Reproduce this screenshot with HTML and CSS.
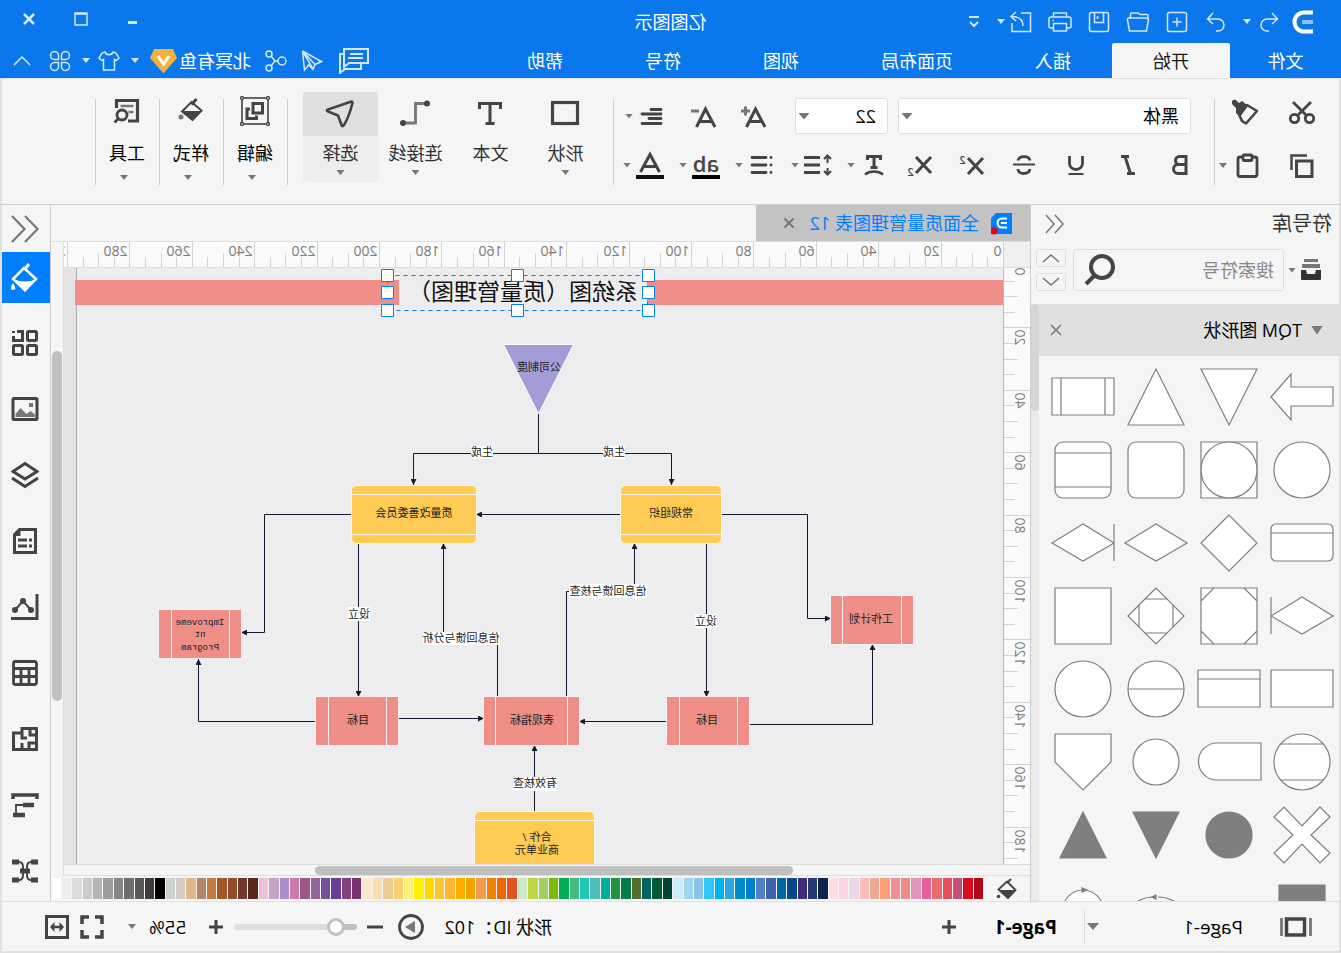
FILE: index.html
```html
<!DOCTYPE html>
<html lang="zh-CN">
<head>
<meta charset="utf-8">
<title>亿图图示</title>
<link rel="stylesheet" href="styles.css">
</head>
<body>
<div class="app">
  <header class="top">
    <div class="titlebar">
      <div class="quick">
        <svg class="brand" width="24" height="24" viewBox="0 0 24 24" fill="none" stroke="#fff"><path d="M2 2.500h9a9.500 9.500 0 0 1 0 19H2" stroke-width="4"/><path d="M2 12h11" stroke="#8fc1fb" stroke-width="4"/></svg>
        <div class="quick-list">
          <span class="pair"><button class="ib" aria-label="撤销"><svg width="24" height="24" viewBox="0 0 24 24"><path d="M9 3L3.500 9l5.500 5M3.500 9h10.500a6 6 0 0 1 0 12h-2"/></svg></button><i class="caret light"></i></span>
          <button class="ib" aria-label="重做"><svg width="24" height="24" viewBox="0 0 24 24"><path d="M15 3l5.500 6-5.500 5M20.500 9H10a6 6 0 0 0 0 12h2"/></svg></button>
          <button class="ib" aria-label="新建"><svg width="24" height="24" viewBox="0 0 24 24"><rect x="2.500" y="2.500" width="19" height="19" rx="2"/><path d="M12 7.500v9M7.500 12h9"/></svg></button>
          <button class="ib" aria-label="打开"><svg width="24" height="24" viewBox="0 0 24 24"><path d="M2 10V5.500q0-1 1-1h7l2-1.500h6.500q1 0 1 1.500V8M3.500 21L1.500 10q0-2 2-2h17q2.500 0 2 2l-2 11z"/></svg></button>
          <button class="ib" aria-label="保存"><svg width="24" height="24" viewBox="0 0 24 24"><rect x="2.500" y="2.500" width="19" height="19" rx="2"/><path d="M7.500 3v9.500h9V3M13.500 6v3"/></svg></button>
          <button class="ib" aria-label="打印"><svg width="24" height="24" viewBox="0 0 24 24"><path d="M5.500 7V3h13v4M5.500 18H3q-2 0-2-2V9q0-2 2-2h18q2 0 2 2v7q0 2-2 2h-2.500M5.500 13.500h13V21h-13zM18 10.500h1.500"/></svg></button>
          <span class="pair narrow"><button class="ib" aria-label="导出"><svg width="24" height="24" viewBox="0 0 24 24"><path d="M12 3H2.500v18.500H21V13M10 16c0-6 4-9.500 11.500-9.500M17 2l5 4.500-5 4.500"/></svg></button><i class="caret light"></i></span>
          <button class="ib" aria-label="自定义"><svg width="16" height="16" viewBox="0 0 16 16"><path d="M3 3h10M4 8l4 4 4-4" stroke-width="2"/></svg></button>
        </div>
      </div>
      <h1>亿图图示</h1>
      <div class="window">
        <button aria-label="最小化"><svg width="16" height="16" viewBox="0 0 16 16"><path d="M4 11.500h9" stroke-width="3"/></svg></button>
        <button aria-label="最大化"><svg width="16" height="16" viewBox="0 0 16 16"><path d="M2 2h12v12H2zM2 3h12" stroke-width="1.500"/></svg></button>
        <button aria-label="关闭"><svg width="16" height="16" viewBox="0 0 16 16"><path d="M3 3l10 10M13 3L3 13" stroke-width="2.500"/></svg></button>
      </div>
    </div>
    <div class="tabbar">
      <nav class="tabs">
        <button class="file">文件</button><button class="on">开始</button><button>插入</button><button>页面布局</button><button>视图</button><button>符号</button><button>帮助</button>
      </nav>
      <div class="account">
        <div class="social">
          <button class="ib chat" aria-label="评论"><svg width="30" height="26" viewBox="0 0 30 26"><path stroke-width="2" d="M1 1h24v18l-5-4H1zM6 6h13M6 10h15M25 6h4v19l-5-4H8v-5"/></svg></button>
          <button class="ib" aria-label="发送"><svg width="22" height="22" viewBox="0 0 22 22"><path d="M20.500 1L1.500 11.500l6.500 3zM8 14.500l2 5 4.500-4.500 4 5 2-19L10 19"/></svg></button>
          <button class="ib" aria-label="分享"><svg width="22" height="22" viewBox="0 0 22 22"><circle cx="5" cy="11" r="4"/><circle cx="18" cy="4" r="3"/><circle cx="18" cy="18" r="3"/><path d="M9 11h3l4-5M12 11l4 5"/></svg></button>
          <span class="user">北冥有鱼<svg width="27" height="26" viewBox="0 0 27 26"><path d="M4 1h19l4 9-13.500 15.500L0 10z" fill="#f5b13d" stroke="none"/><path d="M8 8l5.500 8L19 8" stroke="#fff" stroke-width="3"/></svg></span>
        </div>
        <i class="caret light"></i>
        <span class="pair skin"><button class="ib" aria-label="皮肤"><svg width="22" height="20" viewBox="0 0 22 20"><path d="M7 1c1 3.500 7 3.500 8 0l3 1 3 5-3 2.500-1.500-1V19h-11V8.500L4 9.500 1 7l3-5z"/></svg></button><i class="caret light"></i></span>
        <button class="ib" aria-label="应用"><svg width="22" height="22" viewBox="0 0 22 22"><path d="M9.500 9.500H5.300a4 4 0 1 1 4.200-4.200zM12.500 9.500h4.200a4 4 0 1 0-4.200-4.200zM9.500 12.500H5.300a4 4 0 1 0 4.200 4.200zM12.500 12.500h4.200a4 4 0 1 1-4.200 4.200z"/></svg></button>
        <button class="ib collapse" aria-label="收起"><svg width="18" height="12" viewBox="0 0 18 12"><path d="M1 10l8-8 8 8"/></svg></button>
      </div>
    </div>
  </header>

  <section class="ribbon" aria-label="开始">
    <div class="clip">
      <button aria-label="剪切"><svg width="28" height="28" viewBox="0 0 28 28"><g fill="none" stroke="#444" stroke-width="2.800"><circle cx="6.500" cy="19.500" r="4.200"/><circle cx="21.500" cy="19.500" r="4.200"/><path d="M9.500 16.500L23 3M18.500 16.500L5 3"/></g></svg></button>
      <button aria-label="格式刷"><svg width="28" height="28" viewBox="0 0 28 28"><path d="M3 12L13 6l9 7-4 9-4 2.500z" fill="none" stroke="#444" stroke-width="2.600" stroke-linejoin="round"/><path d="M12 7l6-5 3 2 2-2a2.900 2.900 0 1 1 4 4l-3 3v5l-4 4z" fill="#444"/></svg></button>
      <button aria-label="复制"><svg width="28" height="28" viewBox="0 0 28 28" fill="none" stroke="#444"><rect x="4" y="9" width="15.500" height="15.500" stroke-width="3"/><path d="M9 3.500h15.500V18" stroke-width="2.500"/></svg></button>
      <span class="combo"><button aria-label="粘贴"><svg width="28" height="28" viewBox="0 0 28 28" fill="none" stroke="#444" stroke-width="2.800"><rect x="3" y="5" width="19" height="19.500" rx="2"/><rect x="8" y="3" width="9" height="5.500" rx="1" fill="#f5f5f5"/></svg></button><i class="caret"></i></span>
    </div>
    <div class="fonts">
      <div class="row one">
        <label class="pick face"><select aria-label="字体"><option>黑体</option></select><i class="caret big"></i></label>
        <label class="pick size"><select aria-label="字号"><option>22</option></select><i class="caret big"></i></label>
        <div class="sizes">
          <button aria-label="增大字号"><svg width="28" height="28" viewBox="0 0 28 28" fill="none" stroke="#444" stroke-width="3"><path d="M3 25L12.500 7l9 18M6 19.500h13"/><path d="M18 9h9M22.500 4.500v9" stroke="#777"/></svg></button>
          <button aria-label="减小字号"><svg width="28" height="28" viewBox="0 0 28 28" fill="none" stroke="#444" stroke-width="3"><path d="M2 25L11.500 7l9 18M5 19.500h13"/><path d="M18 9h8" stroke="#777"/></svg></button>
          <span class="combo"><button aria-label="对齐"><svg width="28" height="28" viewBox="0 0 28 28" fill="none" stroke="#444" stroke-width="2.800" stroke-linecap="round"><path d="M5 7.500h10M5 12h19M5 16.500h12M5 21.500h19"/></svg></button><i class="caret"></i></span>
        </div>
      </div>
      <div class="row two">
        <button aria-label="粗体"><svg width="28" height="28" viewBox="0 0 28 28" fill="none" stroke="#444" stroke-width="3"><path d="M8 5.500h6.500a3.700 3.700 0 0 1 0 8H8zM8 13.500h8a4.300 4.300 0 0 1 0 9H8z"/></svg></button>
        <button aria-label="斜体"><svg width="28" height="28" viewBox="0 0 28 28" fill="none" stroke="#444" stroke-width="3"><path d="M13 5.500h8M7 22.500h8M17 5.500l-5.500 17"/></svg></button>
        <button aria-label="下划线"><svg width="28" height="28" viewBox="0 0 28 28" fill="none" stroke="#444" stroke-width="2.800"><path d="M7.500 5v7.500a6.500 6 0 0 0 13 0V5"/><path d="M6.500 23h15" stroke-width="2"/></svg></button>
        <button aria-label="删除线"><svg width="28" height="28" viewBox="0 0 28 28" fill="none" stroke="#444" stroke-width="2.800"><path d="M20 9.500c-1-5-11-5.500-12 0M8 18c1 6 12 6 12 0"/><path d="M3 13.500h22" stroke-width="2"/></svg></button>
        <button class="script-btn" aria-label="上标"><svg width="28" height="28" viewBox="0 0 28 28" fill="none" stroke="#444" stroke-width="3"><path d="M2 7l15 16M17 7L2 23"/></svg><sup>2</sup></button>
        <button class="script-btn" aria-label="下标"><svg width="28" height="28" viewBox="0 0 28 28" fill="none" stroke="#444" stroke-width="3"><path d="M2 6l15 16M17 6L2 22"/></svg><sub>2</sub></button>
        <div class="combos">
          <span class="combo"><button aria-label="艺术字"><svg width="28" height="28" viewBox="0 0 28 28" fill="none" stroke="#444" stroke-width="3"><path d="M7.500 9V5.500h13V9M14 5.500V16M10.500 16.500h7"/><path d="M5 23.500c5-4 13-4 18 0" stroke-width="2.400"/></svg></button><i class="caret"></i></span>
          <span class="combo"><button aria-label="行距"><svg width="28" height="28" viewBox="0 0 28 28" fill="none" stroke="#444" stroke-width="2.800"><path d="M12 6.500h16M12 14h16M12 21.500h16"/><path d="M4.500 5v7M1 8l3.500-3.500L8 8M4.500 24v-7M1 20l3.500 3.500L8 20" stroke-width="2"/></svg></button><i class="caret"></i></span>
          <span class="combo"><button aria-label="项目符号"><svg width="28" height="28" viewBox="0 0 28 28" fill="none" stroke="#444" stroke-width="2.800" stroke-linecap="round"><path d="M10 6.500h14M10 14h14M10 21.500h14M5 6.500h0M5 14h0M5 21.500h0"/></svg></button><i class="caret"></i></span>
          <span class="combo"><button class="mark" aria-label="文字背景">ab</button><i class="caret"></i></span>
          <span class="combo"><button aria-label="字体颜色"><svg width="28" height="28" viewBox="0 0 28 28" fill="none" stroke="#444" stroke-width="3"><path d="M4.500 21L14 3.500 23.500 21M8 15.500h12"/><path d="M0 26h28" stroke="#111" stroke-width="4"/></svg></button><i class="caret"></i></span>
        </div>
      </div>
    </div>
    <div class="tools">
      <button class="tool"><span class="pic"><svg width="30" height="30" viewBox="0 0 30 30"><rect x="2.500" y="3.500" width="25" height="21" fill="none" stroke="#444" stroke-width="3.200"/></svg></span><span>形状</span><i class="caret"></i></button>
      <button class="tool"><span class="pic"><svg width="30" height="30" viewBox="0 0 30 30" fill="none" stroke="#444" stroke-width="3"><path d="M4.500 10V4.500h21V10M15 4.500V24M10.500 24.500h9"/></svg></span><span>文本</span></button>
      <button class="tool"><span class="pic"><svg width="30" height="30" viewBox="0 0 30 30" fill="none"><path d="M3 4.500h11.500v19.500H25" stroke="#777" stroke-width="2.800"/><circle cx="3" cy="4.500" r="3" fill="#444"/><circle cx="27" cy="24" r="3" fill="#444"/></svg></span><span>连接线</span><i class="caret"></i></button>
      <button class="tool picked"><span class="pic"><svg width="30" height="30" viewBox="0 0 30 30"><path d="M3.500 2.500l23.500 8c1.500.5 1.500 1.500 0 2l-10 4-3.500 9.500c-.5 1.500-1.500 1.500-2.500 0q-5-8-8.500-22c0-1 0-1.500 1-1.500z" fill="none" stroke="#444" stroke-width="2.600" stroke-linejoin="round"/></svg></span><span>选择</span><i class="caret"></i></button>
    </div>
    <div class="more">
      <button class="tool"><span class="pic"><svg width="30" height="30" viewBox="0 0 30 30" fill="none" stroke="#444"><rect x="2" y="2" width="26" height="26" stroke-width="1.600"/><g fill="#f5f5f5" stroke-width="1.300"><circle cx="2" cy="2" r="1.500"/><circle cx="28" cy="2" r="1.500"/><circle cx="2" cy="28" r="1.500"/><circle cx="28" cy="28" r="1.500"/></g><rect x="7.500" y="7.500" width="9.500" height="9.500" stroke-width="3"/><path d="M20 13h3v9.500H13.500V19.500" stroke-width="3"/></svg></span><span>编辑</span><i class="caret"></i></button>
      <button class="tool"><span class="pic"><svg width="30" height="30" viewBox="0 0 30 30"><path d="M9.500 3l5 5.500" stroke="#444" stroke-width="3"/><path d="M4.500 14.500l10-8.500L24 15.500 13.500 24z" fill="none" stroke="#444" stroke-width="2"/><path d="M4 15h20L13.500 25z" fill="#444"/><circle cx="25" cy="21" r="2.500" fill="#777"/></svg></span><span>样式</span><i class="caret"></i></button>
      <button class="tool"><span class="pic"><svg width="30" height="30" viewBox="0 0 30 30" fill="none" stroke="#444" stroke-width="3.200"><path d="M14 25H4.500V4.500h21V12"/><path d="M8.500 10h13M8.500 16h5" stroke="#777" stroke-width="2.500"/><circle cx="20" cy="19" r="5" stroke-width="2.800"/><path d="M23.500 22.500l4 4" stroke-width="2.800"/></svg></span><span>工具</span><i class="caret"></i></button>
    </div>
  </section>

  <main class="work">
    <aside class="library">
      <div class="lib-head"><h2>符号库</h2><button aria-label="折叠"><svg width="20" height="20" viewBox="0 0 20 20" fill="none" stroke="#777" stroke-width="1.500"><path d="M10 1L2 10l8 9M19 1l-8 9 8 9"/></svg></button></div>
      <div class="search">
        <button class="lib" aria-label="符号库菜单"><svg width="22" height="22" viewBox="0 0 22 22" fill="#777"><path d="M4 0h14v3H4zM2 5h18v4H2z"/><path d="M1 11h5l1 4h8l1-4h5v9a1 1 0 0 1-1 1H2a1 1 0 0 1-1-1z" fill="#333"/></svg></button><i class="caret"></i>
        <div class="box"><input type="text" placeholder="搜索符号" aria-label="搜索符号"><button aria-label="搜索"><svg width="32" height="34" viewBox="0 0 32 34" fill="none" stroke="#444" stroke-width="4"><circle cx="14" cy="14" r="11"/><path d="M21 22l9 9"/></svg></button></div>
        <div class="steps"><button aria-label="上一个"><svg width="18" height="10" viewBox="0 0 18 10"><path d="M1 9l8-7 8 7"/></svg></button><button aria-label="下一个"><svg width="18" height="10" viewBox="0 0 18 10"><path d="M1 1l8 7 8-7"/></svg></button></div>
      </div>
      <div class="lib-body">
        <div class="lib-list">
          <div class="section"><i class="caret huge"></i><h3>TQM 图形状</h3><button aria-label="关闭"><svg width="12" height="12" viewBox="0 0 12 12"><path d="M1 1l10 10M11 1L1 11" stroke="#777" stroke-width="1.500"/></svg></button></div>
          <div class="shapes">
            <svg viewBox="-36 -36 73 73"><path d="M31 0L11-23V-10H-31V9H11V23z"/></svg>
            <svg viewBox="-36 -36 73 73"><path d="M-28-28H28L0 28z"/></svg>
            <svg viewBox="-36 -36 73 73"><path d="M-28 28H28L0-28z"/></svg>
            <svg viewBox="-36 -36 73 73"><path d="M-31-19H31V18H-31zM-22-19V18M22-19V18"/></svg>
            <svg viewBox="-36 -36 73 73"><circle r="28"/></svg>
            <svg viewBox="-36 -36 73 73"><path d="M-28-28H28V28H-28z"/><circle r="28"/></svg>
            <svg viewBox="-36 -36 73 73"><rect x="-28" y="-28" width="56" height="56" rx="8"/></svg>
            <svg viewBox="-36 -36 73 73"><rect x="-28" y="-28" width="56" height="56" rx="8"/><path d="M-28-17H28M-28 17H28"/></svg>
            <svg viewBox="-36 -36 73 73"><rect x="-31" y="-19" width="62" height="37" rx="5"/><path d="M-31-10H31"/></svg>
            <svg viewBox="-36 -36 73 73"><path d="M0-28L28 0 0 28-28 0z"/></svg>
            <svg viewBox="-36 -36 73 73"><path d="M0-19L31 0 0 18-31 0z"/></svg>
            <svg viewBox="-36 -36 73 73"><path d="M0-19L31 0 0 18-31 0zM-31-19V18"/></svg>
            <svg viewBox="-36 -36 73 73"><path d="M0-19L31 0 0 18-31 0zM31-19V18"/></svg>
            <svg viewBox="-36 -36 73 73"><path d="M-28-28H28V28H-28zM-15-28L-28-15M15-28L28-15M-15 28L-28 15M15 28L28 15"/></svg>
            <svg viewBox="-36 -36 73 73"><path d="M0-28L28 0 0 28-28 0zM-17-11V11M17-11V11M-11-17H11M-11 17H11"/></svg>
            <svg viewBox="-36 -36 73 73"><path d="M-28-28H28V28H-28z"/></svg>
            <svg viewBox="-36 -36 73 73"><path d="M-31-19H31V18H-31z"/></svg>
            <svg viewBox="-36 -36 73 73"><path d="M-31-19H31V18H-31zM-31-10H31"/></svg>
            <svg viewBox="-36 -36 73 73"><circle r="28"/><path d="M-28 0H28"/></svg>
            <svg viewBox="-36 -36 73 73"><circle r="28"/></svg>
            <svg viewBox="-36 -36 73 73"><circle r="28"/><path d="M-21-18H21M-21 18H21"/></svg>
            <svg viewBox="-36 -36 73 73"><path d="M-32-19H12a18.500 18.500 0 0 1 0 37H-32z"/></svg>
            <svg viewBox="-36 -36 73 73"><circle r="23"/></svg>
            <svg viewBox="-36 -36 73 73"><path d="M-28-28H28V0L0 28-28 0z"/></svg>
            <svg viewBox="-36 -36 73 73"><path d="M-18-28L0-9 18-28 28-18 9 0 28 18 18 28 0 9-18 28-28 18-9 0-28-18z"/></svg>
            <svg viewBox="-36 -36 73 73" class="solid"><circle r="23"/></svg>
            <svg viewBox="-36 -36 73 73" class="solid"><path d="M-23-23H23L0 23z"/></svg>
            <svg viewBox="-36 -36 73 73" class="solid"><path d="M-23 23H23L0-23z"/></svg>
            <svg viewBox="-36 -36 73 73" class="solid"><path d="M-23-23H23V23H-23z"/></svg>
            <svg viewBox="-36 -36 73 73"></svg>
            <svg viewBox="-36 -36 73 73"><path d="M-18-7Q-10-11-2-11M1-11Q11-11 18-7" fill="none"/><path d="M4-11l-4-2v4z" class="tip"/></svg>
            <svg viewBox="-36 -36 73 73"><circle cy="2" r="20"/><path d="M-4-18l5-2v4z" class="tip"/></svg>
          </div>
        </div>
        <div class="track"><span></span></div>
      </div>
    </aside>

    <section class="editor">
      <div class="docs"><div class="doc"><svg width="21" height="26" viewBox="0 0 21 26"><path d="M0 3h16l5 5v16H0z" fill="#0080ff"/><path d="M5 8.500h5a4.500 4.500 0 0 1 0 9H5M5 13h6" fill="none" stroke="#fff" stroke-width="2"/><circle cx="18" cy="21" r="3.500" fill="#e60012"/></svg><span>全面质量管理图表 12</span><button aria-label="关闭文档"><svg width="12" height="12" viewBox="0 0 12 12"><path d="M1.500 1.500l9 9M10.500 1.500l-9 9" stroke="#777" stroke-width="2"/></svg></button></div></div>
      <div class="stage">
        <div class="surface">
          <svg class="ruler-x" id="rulerX" height="26"></svg>
          <div class="lower">
            <svg class="ruler-y" id="rulerY" width="27"></svg>
            <div class="canvas">
              <svg width="939" height="596" viewBox="338 268 939 596">
                <defs><marker id="tip" viewBox="0 0 6 6" refX="6" refY="3" markerWidth="6" markerHeight="6" orient="auto"><path d="M0 0L6 3 0 6z" fill="#14182f"/></marker></defs>
                <rect x="338" y="268" width="926" height="596" fill="#ededef"/>
                <path d="M1264.500 268v596" stroke="#ababab"/>
                <path d="M338 280h356v25H338zM942 280h324v25H942z" fill="#ee8e87"/>
                <g class="wire">
                  <path d="M802.500 414V453.500"/>
                  <path d="M802.500 453.500H669.500V485" marker-end="url(#tip)"/>
                  <path d="M802.500 453.500H927.500V485" marker-end="url(#tip)"/>
                  <path d="M720 514.500H865" marker-end="url(#tip)"/>
                  <path d="M620 514.500H533.500V618.500H510" marker-end="url(#tip)"/>
                  <path d="M989 514.500H1076.500V632.500H1100" marker-end="url(#tip)"/>
                  <path d="M634.500 543V697" marker-end="url(#tip)"/>
                  <path d="M982.500 543V697" marker-end="url(#tip)"/>
                  <path d="M592 724.500H468.500V644" marker-end="url(#tip)"/>
                  <path d="M674 721.500H762" marker-end="url(#tip)"/>
                  <path d="M943 718.500H857" marker-end="url(#tip)"/>
                  <path d="M1025 721.500H1142.500V659" marker-end="url(#tip)"/>
                  <path d="M774.500 697V591.500H706.500V543" marker-end="url(#tip)"/>
                  <path d="M843.500 697V638.500H897.500V543" marker-end="url(#tip)"/>
                  <path d="M806.500 812V745" marker-end="url(#tip)"/>
                </g>
                <path d="M767.500 344.500H837.500L802.500 414z" fill="#a39cd6" stroke="#fff"/>
                <g class="yellow">
                  <rect x="619.500" y="485.500" width="101" height="58" rx="5"/><path d="M620 494.500h100M620 534.500h100"/>
                  <rect x="864.500" y="485.500" width="125" height="58" rx="5"/><path d="M865 494.500h124M865 534.500h124"/>
                  <rect x="746.500" y="811.500" width="120" height="70" rx="5"/><path d="M747 820.500h119"/>
                </g>
                <g class="pink">
                  <path d="M427.500 595.500h83v49h-83zM439.500 596v48M498.500 596v48"/>
                  <path d="M591.500 696.500h83v49h-83zM603.500 697v48M661.500 697v48"/>
                  <path d="M761.500 696.500h96v49h-96zM773.500 697v48M845.500 697v48"/>
                  <path d="M942.500 696.500h83v49h-83zM954.500 697v48M1012.500 697v48"/>
                  <path d="M1099.500 609.500h83v49h-83zM1111.500 610v49M1169.500 610v49"/>
                </g>
                <g fill="#fff"><path d="M716 446h22v13h-22zM848 446h22v13h-22zM624 614h22v14h-22zM971 607h22v14h-22zM694 584h78v14h-78zM841 632h77v13h-77zM784 777h44v14h-44z"/></g>
                <g class="label">
                  <text x="802" y="371">公司制度</text><text x="727" y="456">生成</text><text x="859" y="456">生成</text>
                  <text x="670" y="517">常规组织</text><text x="927" y="517">质量改善委员会</text><text x="470" y="623">工作计划</text>
                  <text x="635" y="625">设立</text><text x="982" y="618">设立</text><text x="733" y="595">信息回馈与核查</text><text x="880" y="642">信息回馈与分析</text>
                  <text x="634" y="724">目标</text><text x="809" y="724">表现指标</text><text x="983" y="724">目标</text><text x="806" y="787">有效核查</text>
                  <text x="804" y="841">合作 /</text><text x="804" y="854">商业单元</text>
                </g>
                <g class="mono"><text x="1141" y="625">Improveme</text><text x="1141" y="637">nt</text><text x="1141" y="650">Program</text></g>
                <text class="headline" x="818" y="300">系统图（质量管理图）</text>
                <path d="M693.500 275.500H953.500V310.500H693.500z" fill="none" stroke="#0080ff" stroke-dasharray="4 4"/>
                <path class="grip" d="M686.500 269.500h12v12h-12zM817.500 269.500h12v12h-12zM947.500 269.500h12v12h-12zM686.500 286.500h12v12h-12zM947.500 286.500h12v12h-12zM686.500 304.500h12v12h-12zM817.500 304.500h12v12h-12zM947.500 304.500h12v12h-12z"/>
              </svg>
            </div>
          </div>
          <div class="hbar"><span></span></div>
        </div>
        <div class="vbar"><span></span></div>
      </div>
      <div class="palette"><svg width="22" height="22" viewBox="0 0 22 22"><path d="M7 1l4 4" stroke="#444" stroke-width="2"/><path d="M2.500 12L11 3.500l8.500 8L10 20z" fill="none" stroke="#444" stroke-width="1.800"/><path d="M2 12h17.500L10 21z" fill="#444"/><circle cx="19.500" cy="18.500" r="1.800" fill="#444"/></svg><div class="swatches" id="swatches"></div></div>
    </section>

    <aside class="side">
      <button class="fold" aria-label="展开"><svg width="28" height="28" viewBox="0 0 28 28" fill="none" stroke="#777" stroke-width="2.200"><path d="M14 1L1.500 14 14 27M27 1L14.500 14 27 27"/></svg></button>
      <button class="active" aria-label="填充"><svg width="28" height="30" viewBox="0 0 28 30"><path d="M10 1l4 5" stroke="#fff" stroke-width="3"/><path d="M3 16L15 5l11 11-12 11z" fill="none" stroke="#fff" stroke-width="2.500"/><path d="M2 16q12 5 24 0L14 29z" fill="#fff"/><path d="M26 20q4.500 7 0 7t0-7" fill="#fff"/></svg></button>
      <button aria-label="符号"><svg width="28" height="28" viewBox="0 0 28 28" fill="none" stroke="#444" stroke-width="3"><rect x="2.500" y="2.500" width="9" height="9" rx="1"/><path d="M22 2.500h-5.500v9h9V7M25.500 2v2"/><rect x="2.500" y="16.500" width="9" height="9" rx="1"/><rect x="16.500" y="16.500" width="9" height="9" rx="1"/></svg></button>
      <button aria-label="图片"><svg width="28" height="28" viewBox="0 0 28 28"><rect x="2" y="3.500" width="24" height="21" rx="1" fill="none" stroke="#444" stroke-width="3"/><path d="M3.500 22v-2l5-4 4 3 6-6 5 6v3zM6 8h4v4H6z" fill="#777"/></svg></button>
      <button aria-label="图层"><svg width="28" height="28" viewBox="0 0 28 28" fill="none" stroke="#444" stroke-width="3"><path d="M14 2.500L26 10.500 14 18 2 10.500z"/><path d="M1 17l13 8.500L27 17"/></svg></button>
      <button aria-label="页面"><svg width="28" height="28" viewBox="0 0 28 28" fill="none" stroke="#444" stroke-width="3"><path d="M3.500 2.500h16l5 5v18h-21z"/><path d="M18.500 3v6H25L20 3z" fill="#444" stroke="none"/><path d="M7 13h3M12 13h9M7 19h3M12 19h9"/></svg></button>
      <button aria-label="图表"><svg width="28" height="28" viewBox="0 0 28 28" fill="none" stroke="#444" stroke-width="3"><path d="M2 1v24.500h26"/><path d="M8 17l8-9 8 9" stroke-width="2"/><g fill="#444" stroke="none"><circle cx="8" cy="17" r="3"/><circle cx="16" cy="8" r="3"/><circle cx="24" cy="17" r="3"/></g></svg></button>
      <button aria-label="表格"><svg width="28" height="28" viewBox="0 0 28 28" fill="none" stroke="#444" stroke-width="2.800"><rect x="2.500" y="2.500" width="23" height="23" rx="2"/><path d="M2 9.500h24M2 17.500h24M10 10v15M18 10v15"/></svg></button>
      <button aria-label="平面图"><svg width="28" height="28" viewBox="0 0 28 28" fill="none" stroke="#444" stroke-width="3"><path d="M2.500 3.500H17V8h8.500v16.500h-23zM2.500 10H9V4M17 8v5h-5M2.500 18H10v6M17 24v-6"/></svg></button>
      <button aria-label="流程"><svg width="28" height="28" viewBox="0 0 28 28" fill="none" stroke="#444"><path d="M2 8V4h24v4" stroke-width="3.500"/><path d="M12 14h11v9" stroke-width="1.800"/><path d="M5 14h11M14 24h12" stroke-width="4.500"/></svg></button>
      <button aria-label="导图"><svg width="28" height="28" viewBox="0 0 28 28" fill="none" stroke="#444"><path d="M8 5q4 0 4 5v8q0 5-4 5M20 5q-4 0-4 5v8q0 5 4 5" stroke-width="2"/><path d="M1 5h7M1 23h7M20 5h7M20 23h7M9 14h10" stroke-width="5"/></svg></button>
    </aside>
  </main>

  <footer class="status">
    <div class="pages">
      <button aria-label="页面视图"><svg width="32" height="20" viewBox="0 0 32 20" fill="none" stroke="#444"><rect x="7.500" y="2" width="18" height="16" stroke-width="3.500"/><path d="M1.500 1v18M30.500 1v18" stroke="#777" stroke-width="2.800"/></svg></button>
      <span class="page-name">Page-1</span><i class="caret big"></i>
    </div>
    <button class="page-tab">Page-1</button>
    <button class="add" aria-label="添加页面"><svg width="16" height="16" viewBox="0 0 16 16"><path d="M8 1v14M1 8h14" stroke="#444" stroke-width="3"/></svg></button>
    <div class="zoom">
      <span class="shape-id">形状 ID：102</span>
      <button aria-label="播放"><svg width="26" height="26" viewBox="0 0 26 26"><circle cx="13" cy="13" r="11.500" fill="none" stroke="#444" stroke-width="2.800"/><path d="M9 7l10 6-10 6z" fill="#777"/></svg></button>
      <button class="minus" aria-label="缩小"><svg width="16" height="16" viewBox="0 0 16 16"><path d="M0 8h16" stroke="#444" stroke-width="3"/></svg></button>
      <input type="range" min="0" max="100" value="12" aria-label="缩放比例">
      <button class="plus" aria-label="放大"><svg width="16" height="16" viewBox="0 0 16 16"><path d="M8 1v14M1 8h14" stroke="#444" stroke-width="3"/></svg></button>
      <span class="ratio">55%</span><i class="caret"></i>
      <button class="full" aria-label="全屏"><svg width="24" height="24" viewBox="0 0 24 24"><path d="M9 2H2v7M15 2h7v7M9 22H2v-7M15 22h7v-7" fill="none" stroke="#444" stroke-width="3.500"/></svg></button>
      <button aria-label="适合宽度"><svg width="24" height="24" viewBox="0 0 24 24" fill="none" stroke="#444" stroke-width="3"><rect x="1.500" y="1.500" width="21" height="21"/><path d="M6 12h12" stroke-width="2.500"/><path d="M9.500 7L5 12l4.500 5zM14.500 7l4.500 5-4.500 5z" fill="#444" stroke="none"/></svg></button>
    </div>
  </footer>
</div>
<script src="app.js"></script>
</body>
</html>
```

FILE: styles.css
```css
* { box-sizing: border-box; }
body { margin: 0; font: 18px/24px "Open Sans", "Noto Sans CJK SC", sans-serif; color: #1a1a1a; }
button { display: flex; align-items: center; justify-content: center; padding: 0; border: 0; background: none; color: inherit; font: inherit; }
svg { display: block; flex: none; }
h1, h2, h3 { margin: 0; font-size: 18px; font-weight: 400; }

.app { display: flex; flex-direction: column; height: 100vh; overflow: hidden; background: #f5f5f5; transform: scaleX(-1); }

.caret { flex: none; width: 8px; height: 5px; background: #777; clip-path: polygon(0 0, 100% 0, 50% 100%); }
.caret.light { background: #d5e8ff; }
.caret.big { width: 12px; height: 7px; }
.caret.huge { width: 12px; height: 9px; }

/* title bar and tabs */
.top { flex: none; background: #0a77ec; color: #fff; }
.top svg { fill: none; stroke: #d5e8ff; stroke-width: 1.5; }
.top .brand { stroke: #fff; }
.titlebar { display: grid; grid-template-columns: 1fr auto 1fr; align-items: center; height: 43px; }
.quick { display: flex; align-items: center; padding-left: 26px; gap: 10px; }
.quick-list { display: flex; align-items: center; gap: 15px; }
.pair { display: flex; align-items: center; gap: 6px; }
.pair.narrow { gap: 4px; }
.window { display: flex; align-self: start; justify-content: flex-end; height: 38px; padding-right: 3px; }
.window button { width: 52px; }
.tabbar { display: flex; justify-content: space-between; height: 35px; }
.tabs { display: flex; }
.tabs button { padding: 0 41px; white-space: nowrap; }
.tabs .file { width: 111px; }
.tabs .on { border-radius: 2px 2px 0 0; background: #f5f5f5; color: #1a1a1a; }
.account { display: flex; align-items: center; gap: 11px; padding-right: 13px; }
.social { display: flex; align-items: center; gap: 14px; margin-right: -4px; }
.user { display: flex; align-items: center; gap: 2px; white-space: nowrap; }
.chat { margin-right: 2px; }
.skin { gap: 8px; }
.collapse { margin-left: 7px; }
.account > .caret { margin-left: 4px; }

/* ribbon */
.ribbon { display: flex; flex: none; height: 127px; border: 2px solid #e0e0e0; border-width: 1px 2px; border-bottom-color: #d0d0d0; }
.ribbon > div + div { position: relative; }
.ribbon > div + div::before, .more .tool + .tool::before, .more::after { content: ""; position: absolute; left: 0; top: 20px; width: 1px; height: 86px; background: #ccc; }
.clip { display: grid; grid-template-columns: 56px 59px; grid-auto-rows: 53px; padding: 7px 0 0 9px; }
.clip > :nth-child(even) { justify-content: flex-start; padding-left: 14px; }
.combo { display: flex; align-items: center; gap: 5px; }
.fonts { width: 601px; padding: 19px 0 0 9px; }
.row { display: flex; height: 36px; }
.one { gap: 10px; margin-left: 15px; }
.two { margin-top: 13px; }
.two > button { width: 52px; }
.pick { display: flex; align-items: center; border: 1px solid #ddd; border-radius: 3px; background: #fff; padding-right: 2px; }
.pick select { flex: 1; min-width: 0; height: 34px; padding: 0 0 0 11px; border: 0; appearance: none; background: none; color: #000; font: inherit; }
.face { width: 293px; }
.size { width: 93px; }
.sizes { display: flex; align-items: center; gap: 23px; margin-left: 17px; }
.combos { display: flex; gap: 15px; margin-left: 6px; }
.script-btn sup, .script-btn sub { margin-left: -9px; font-size: 11px; line-height: 12px; font-weight: 600; color: #444; }
.script-btn sup { align-self: flex-start; padding-top: 7px; }
.script-btn sub { align-self: flex-end; padding-bottom: 5px; }
.mark { width: 28px; height: 28px; border-bottom: 4px solid #000; color: #444; font-size: 22px; line-height: 24px; font-weight: 600; }
.tools { display: flex; padding: 13px 15px 0 11px; }
.tool { flex-direction: column; justify-content: flex-start; width: 75px; height: 90px; color: #333; white-space: nowrap; }
.tool .pic { display: flex; align-items: center; justify-content: center; width: 100%; height: 44px; margin-bottom: 5px; }
.tool .caret { margin-top: 5px; }
.picked { border-radius: 3px; background: #ededed; }
.picked .pic { background: #e0e0e0; border-radius: 3px 3px 0 0; }
.more { display: flex; }
.more::after { left: 192px; }
.more .tool { position: relative; width: 64px; height: 126px; padding: 10px 0 0 2px; color: #000; }
.more .tool .pic { margin-bottom: 8px; }
.more .tool .caret { margin: 10px 0 0 6px; }

/* work area */
.work { display: flex; flex: 1; min-height: 0; border: 2px solid #e0e0e0; border-width: 0 2px; }
.library { display: flex; flex-direction: column; flex: none; width: 309px; border-right: 1px solid #ccc; }
.lib-head { display: flex; align-items: center; justify-content: space-between; height: 37px; padding: 0 14px 0 7px; }
.lib-head h2 { font-size: 20px; color: #333; }
.search { display: flex; align-items: center; height: 56px; padding: 0 5px 0 17px; }
.search > .caret { margin: 0 4px; }
.box { display: flex; align-items: center; flex: 1; min-width: 0; height: 42px; border: 1px solid #ddd; border-radius: 3px; padding-right: 10px; }
.box input { flex: 1; min-width: 0; padding: 0 9px; border: 0; background: none; font: inherit; }
.box input::placeholder { color: #888; opacity: 1; }
.steps { display: grid; gap: 6px; margin-left: 7px; }
.steps button { width: 30px; height: 18px; border: 1px solid #ddd; border-radius: 3px; }
.steps svg { fill: none; stroke: #777; stroke-width: 1.5; }
.lib-body { display: flex; flex: 1; min-height: 0; margin-top: 6px; }
.lib-list { flex: 1; overflow: hidden; }
.section { display: flex; align-items: center; height: 52px; padding: 0 11px 0 16px; background: #e0e0e0; color: #000; }
.section h3 { flex: 1; padding-left: 9px; }
.shapes { display: grid; grid-template-columns: repeat(4, 73px); grid-auto-rows: 73px; padding: 5px 0 0 1px; }
.shapes svg { fill: #fff; stroke: #7f7f7f; stroke-width: 1.2; }
.shapes .solid, .shapes .tip { fill: #7f7f7f; }
.track { width: 8px; background: #ebebeb; }
.track span { display: block; height: 107px; border-radius: 4px; background: #d6d6d6; }

.editor { display: flex; flex-direction: column; flex: 1; min-width: 0; }
.docs { display: flex; height: 36px; flex: none; }
.doc { display: flex; align-items: center; width: 274px; padding: 0 27px 0 18px; background: #c3c3c3; color: #0080ff; white-space: nowrap; }
.doc span { flex: 1; padding-left: 12px; }
.stage { display: flex; flex: 1; min-height: 0; border-top: 1px solid #ddd; }
.surface { display: flex; flex-direction: column; flex: 1; min-width: 0; }
.ruler-x { width: 100%; border-bottom: 1px solid #ddd; background: #fafafa; }
.ruler-x text, .ruler-y text { font-size: 14px; fill: #7a7a7a; }
.ruler-x path, .ruler-y path { stroke: #d2d2d2; }
.lower { display: flex; flex: 1; min-height: 0; }
.ruler-y { height: 100%; border-right: 1px solid #bbb; background: #fafafa; }
.canvas { flex: 1; min-width: 0; overflow: hidden; background: #e3e3e3; }
.wire path { fill: none; stroke: #14182f; }
.yellow { fill: #ffcb54; stroke: #fff8e8; }
.pink { fill: #ee8e87; stroke: #fdf2f2; }
.label { font-size: 11px; text-anchor: middle; fill: #222; }
.mono { font-family: "Liberation Mono", monospace; font-size: 9px; text-anchor: middle; fill: #222; }
.headline { font-size: 23px; text-anchor: middle; fill: #111; }
.grip { fill: #fff; stroke: #0080ff; }
.hbar { height: 12px; flex: none; padding: 1px 0 0 237px; border: 1px solid #ddd; border-width: 1px 0; }
.hbar span { display: block; width: 478px; height: 9px; border-radius: 5px; background: #bfbfbf; }
.vbar { flex: none; width: 13px; padding: 109px 1px 0; border-left: 1px solid #ddd; }
.vbar span { display: block; height: 350px; border-radius: 5px; background: #bfbfbf; }
.palette { display: flex; align-items: center; flex: none; height: 25px; padding-left: 12px; }
.swatches { display: flex; flex: 1; gap: 1px; height: 21px; margin: 0 1px 0 13px; }
.swatches span { flex: 1; }

.side { display: flex; flex-direction: column; flex: none; width: 49px; border-left: 1px solid #ccc; overflow: hidden; }
.side button { flex: none; width: 50px; height: 66px; }
.side .fold { height: 47px; }
.side .active { height: 51px; margin-bottom: 7px; background: #0080ff; }

/* status bar */
.status { display: flex; align-items: center; flex: none; height: 52px; border: 2px solid #e0e0e0; border-top-width: 1px; white-space: nowrap; color: #000; }
.pages { display: flex; align-items: center; width: 255px; height: 36px; padding: 0 2px 0 27px; border-right: 1px solid #ddd; }
.page-name { flex: 1; padding-left: 37px; font-size: 19px; }
.page-tab { margin-left: 27px; font-size: 19px; font-weight: 700; }
.add { margin-left: 38px; }
.zoom { display: flex; align-items: center; margin-left: auto; padding-right: 43px; }
.shape-id { margin-right: 20px; }
.minus { margin: 0 10px 0 15px; }
.zoom input { width: 123px; height: 18px; margin: 0 10px 0 0; appearance: none; background: none; }
.zoom input::-webkit-slider-runnable-track { height: 6px; border-radius: 3px; background: linear-gradient(90deg, #bfbfbf 16%, #dedede 16%); }
.zoom input::-webkit-slider-thumb { appearance: none; width: 18px; height: 18px; margin-top: -6px; border: 3px solid #bfbfbf; border-radius: 9px; background: #fff; }
.ratio { margin: 0 13px 0 22px; font-size: 19px; }
.full { margin: 0 11px 0 24px; }
```

FILE: app.js
```javascript
const colours = ("b30716 d80c1c c74e78 e94f61 ea6a6f e75e9d e194b8 ed8c87 f08d9a ff9f78 efa993 f6bdbb ebd6ea fdd3e5 ffdde3 " +
  "0f2350 243a70 402d77 07488b 00679f 4061ae 5380c5 007fcd 008bcd 2ca7e1 00b3f0 30c6fa 8bc1ea 9ed7ef cfeaf7 " +
  "004334 005b35 006561 556c2d 007d48 1f9541 00ad9b 4dbdc0 1bcab0 48ba7f 00b058 7eb80f a3d064 bed742 cee7c9 " +
  "e35222 ec6700 ef8100 f39a52 f3a200 ffae00 fcb632 f9c630 ffd800 ffef00 fcf080 fdd06f ebcb96 fddcae fce8d0 " +
  "7a3170 83407f 683f97 73539a 95639d 9d5788 cc79ac aa8fcf c7a2c7 ebc1da " +
  "58291c 733930 924d2b a8552a c27c43 b3866c deb887 d4cbc6 c9d3cb 000000 3e3839 595758 6e6e6e 868686 9b9e9d b3b6b5 cacdcc dcdcdc eeeeee ffffff").split(" ");
document.getElementById("swatches").innerHTML =
  colours.map(c => `<span style="background:#${c}"></span>`).join("");

// Four ticks for each 20 units: one full, one middle, two short.
const step = 62.4 / 4;
let x = '<rect width="27" height="26" fill="#f0f0f0"/>';
for (let i = 0; i < 62; i++) {
  const p = Math.round(26 + i * step) + 0.5;
  x += `<path d="M${p} ${i % 4 === 0 ? 0 : i % 2 ? 15 : 11}V26"/>`;
  if (i % 4 === 0) x += `<text x="${p + 2}" y="14">${i * 5}</text>`;
}
document.getElementById("rulerX").innerHTML = x;

let y = "";
for (let i = 0; i < 40; i++) {
  const p = Math.round(i * step - 3) + 0.5;
  y += `<path d="M${i % 4 === 0 ? 0 : i % 2 ? 15 : 12} ${p}H27"/>`;
  if (i % 4 === 0) y += `<text transform="translate(15 ${p + 2}) rotate(-90)" text-anchor="end">${i * 5}</text>`;
}
document.getElementById("rulerY").innerHTML = y;
```
